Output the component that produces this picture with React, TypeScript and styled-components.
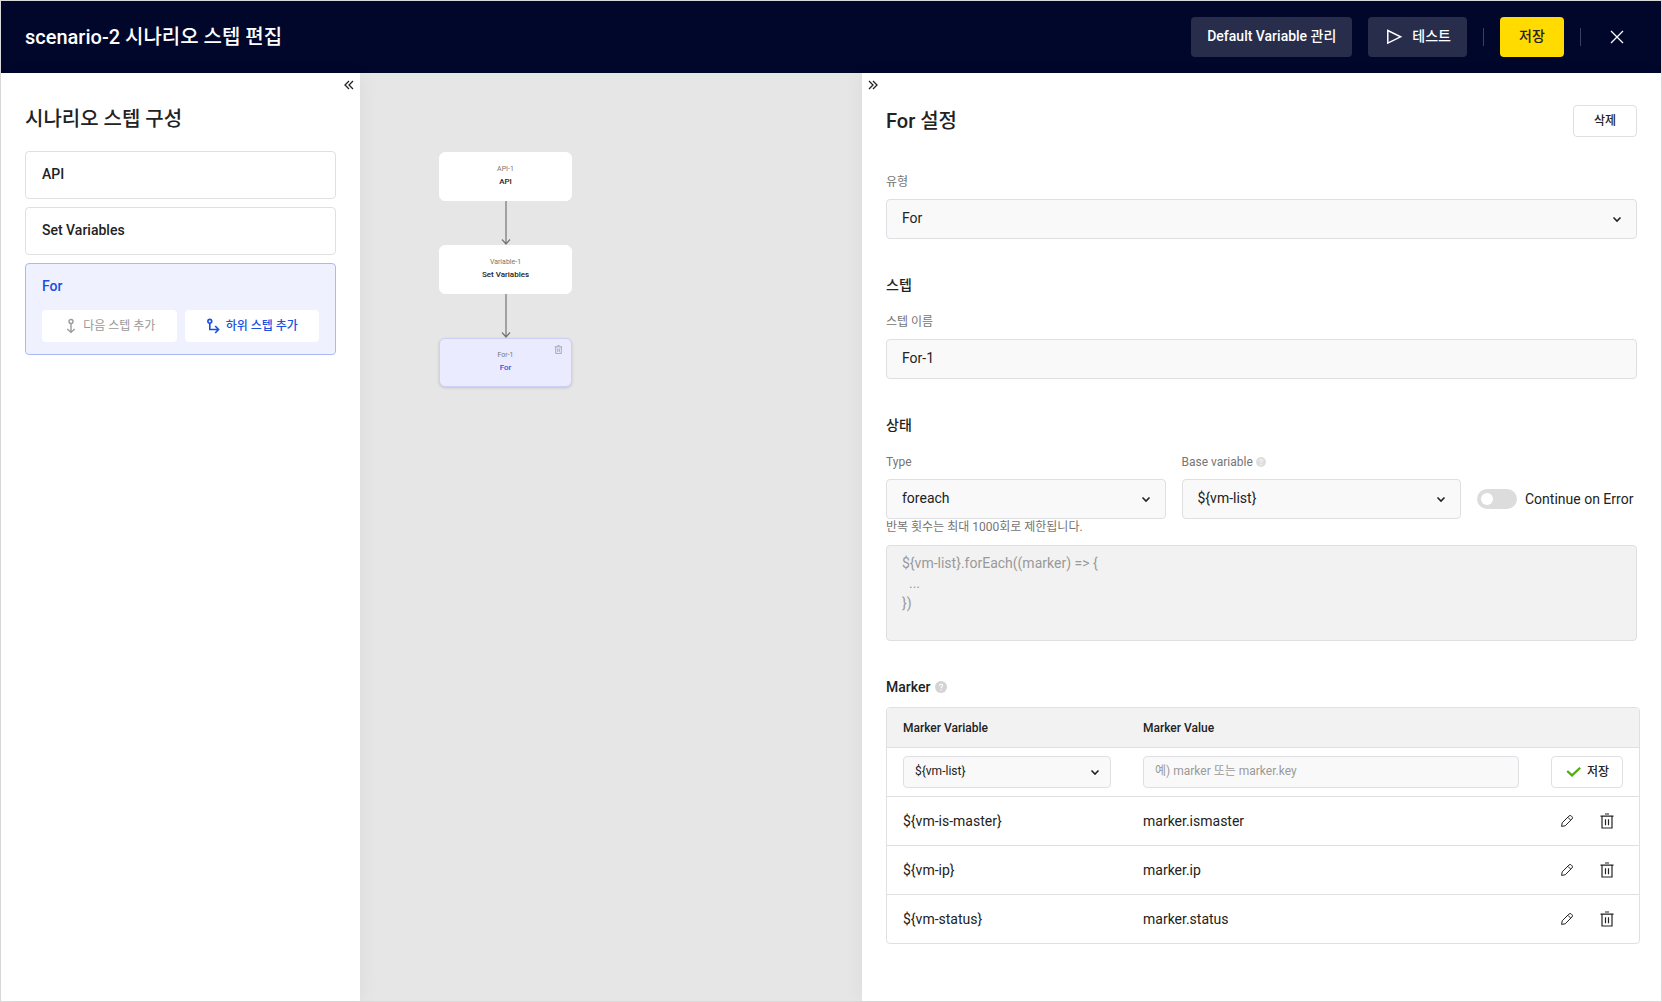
import React, { useState } from "react";
import styled, { createGlobalStyle, css } from "styled-components";

const color = {
  navy: "#00072b",
  navyButton: "#282d4b",
  yellow: "#ffdb00",
  text: "#222222",
  sub: "#757575",
  muted: "#999999",
  line: "#dfdfe3",
  rowLine: "#e0e0e0",
  field: "#f9f9f9",
  disabled: "#f2f2f2",
  canvas: "#e6e6e6",
  blue: "#1a4fe0",
  blueSoft: "#eff2fe",
  blueLine: "#a9b9f8",
};

const GlobalStyle = createGlobalStyle`
  *, *::before, *::after { box-sizing: border-box; }
  body { margin: 0; }
  body, button, input, select, textarea {
    font-family: Roboto, "Noto Sans CJK KR", sans-serif;
    font-size: 14px;
    line-height: 20px;
    color: ${color.text};
  }
  button { cursor: pointer; }
  h1, h2, h3, p { margin: 0; }
`;

const Page = styled.div`
  display: flex;
  flex-direction: column;
  min-height: 100vh;
  border: 1px solid #d9d9d9;
  background: #fff;
`;

const Header = styled.header`
  display: flex;
  align-items: center;
  justify-content: space-between;
  height: 72px;
  padding: 0 24px;
  background: ${color.navy};
`;

const Title = styled.h1`
  font-size: 20px;
  line-height: 28px;
  font-weight: 500;
  color: #fff;
`;

const HeaderActions = styled.div`
  display: flex;
  align-items: center;
  gap: 16px;
`;

const HeaderButton = styled.button<{ $primary?: boolean }>`
  display: flex;
  align-items: center;
  justify-content: center;
  gap: 8px;
  height: 40px;
  min-width: 64px;
  padding: 0 16px 2px;
  border: 0;
  border-radius: 4px;
  font-weight: 500;
  background: ${(p) => (p.$primary ? color.yellow : color.navyButton)};
  color: ${(p) => (p.$primary ? color.text : "#fff")};
`;

const Divider = styled.span`
  width: 1px;
  height: 18px;
  background: #3a4060;
`;

const IconButton = styled.button<{ $size: number }>`
  display: flex;
  align-items: center;
  justify-content: center;
  width: ${(p) => p.$size}px;
  height: ${(p) => p.$size}px;
  padding: 0;
  border: 0;
  background: none;
`;

const Workspace = styled.div`
  flex: 1;
  display: grid;
  grid-template-columns: 359px minmax(240px, 1fr) 799px;
`;

const Panel = styled.section<{ $side: "left" | "right" }>`
  z-index: 1;
  padding: 0 24px 24px;
  background: #fff;
  box-shadow: ${(p) => (p.$side === "left" ? "4px" : "-4px")} 0 16px rgba(0, 0, 0, 0.04);
`;

const PanelToggle = styled.div<{ $side: "left" | "right" }>`
  display: flex;
  justify-content: ${(p) => (p.$side === "left" ? "flex-end" : "flex-start")};
  height: 32px;
  margin: 0 -24px;
  padding-top: 1px;
`;

const PanelTitle = styled.h2`
  font-size: 20px;
  line-height: 28px;
  font-weight: 500;
`;

const StepList = styled.ul`
  display: flex;
  flex-direction: column;
  gap: 8px;
  margin: 18px 0 0;
  padding: 0;
  list-style: none;
`;

const StepCard = styled.li<{ $active?: boolean }>`
  border: 1px solid ${(p) => (p.$active ? color.blueLine : color.rowLine)};
  border-radius: 4px;
  padding: 0 16px;
  background: ${(p) => (p.$active ? color.blueSoft : "#fff")};
`;

const StepName = styled.h3<{ $active?: boolean }>`
  padding-bottom: 2px;
  font-size: 14px;
  line-height: 44px;
  font-weight: 500;
  color: ${(p) => (p.$active ? color.blue : color.text)};
`;

const StepActions = styled.div`
  display: grid;
  grid-template-columns: 1fr 1fr;
  gap: 8px;
  padding-bottom: 12px;
`;

const StepButton = styled.button<{ $enabled?: boolean }>`
  display: flex;
  align-items: center;
  justify-content: center;
  gap: 4px;
  height: 32px;
  padding: 0;
  border: 0;
  border-radius: 4px;
  background: #fff;
  font-size: 12px;
  font-weight: ${(p) => (p.$enabled ? 500 : 400)};
  color: ${(p) => (p.$enabled ? color.blue : color.muted)};
`;

const Canvas = styled.main`
  display: flex;
  flex-direction: column;
  align-items: flex-start;
  padding: 79px;
  background: ${color.canvas};
`;

const Flow = styled.div`
  display: flex;
  flex-direction: column;
  align-items: center;
`;

const Node = styled.div<{ $active?: boolean }>`
  position: relative;
  display: flex;
  flex-direction: column;
  align-items: center;
  justify-content: center;
  gap: 3px;
  width: 133px;
  height: 49px;
  padding-bottom: 2px;
  border: 1px solid ${(p) => (p.$active ? "#cdd0f5" : "#fff")};
  border-radius: 6px;
  background: ${(p) => (p.$active ? "#eaebfe" : "#fff")};
  ${(p) =>
    p.$active &&
    css`
      box-shadow: 0 1px 3px rgba(0, 0, 0, 0.15);
    `}
`;

const NodeId = styled.span`
  font-size: 7px;
  line-height: 10px;
  color: #757575;
`;

const NodeName = styled.strong<{ $active?: boolean }>`
  font-size: 8px;
  line-height: 10px;
  font-weight: 500;
  color: ${(p) => (p.$active ? "#3a4ee0" : color.text)};
`;

const NodeDelete = styled.button`
  position: absolute;
  top: 6px;
  right: 8px;
  display: flex;
  padding: 0;
  border: 0;
  background: none;
`;

const PanelHeader = styled.div`
  display: flex;
  align-items: center;
  justify-content: space-between;
  height: 32px;
  margin-bottom: 35px;
`;

const SmallButton = styled.button<{ $width: number }>`
  display: flex;
  align-items: center;
  justify-content: center;
  gap: 6px;
  width: ${(p) => p.$width}px;
  height: 32px;
  padding: 0;
  border: 1px solid ${color.rowLine};
  border-radius: 4px;
  background: #fff;
  font-size: 12px;
  font-weight: 500;
`;

const Group = styled.section`
  margin-bottom: 36px;
  &:last-child {
    margin-bottom: 0;
  }
`;

const GroupTitle = styled.h3<{ $gap: number }>`
  display: flex;
  align-items: center;
  gap: 5px;
  margin-bottom: ${(p) => p.$gap}px;
  font-size: 14px;
  line-height: 20px;
  font-weight: 500;
`;

const Field = styled.div`
  display: flex;
  flex-direction: column;
  gap: 7px;
`;

const Label = styled.label`
  display: flex;
  align-items: center;
  gap: 3px;
  font-size: 12px;
  line-height: 20px;
  color: ${color.sub};
`;

const box = css<{ $small?: boolean }>`
  display: block;
  width: 100%;
  height: ${(p) => (p.$small ? 32 : 40)}px;
  padding: 0 ${(p) => (p.$small ? 11 : 15)}px 2px;
  border: 1px solid ${color.line};
  border-radius: 4px;
  background: ${color.field};
  font-size: ${(p) => (p.$small ? 12 : 14)}px;
  outline: none;
`;

const Input = styled.input<{ $small?: boolean }>`
  ${box}
  &::placeholder {
    color: ${color.muted};
    opacity: 1;
  }
`;

const SelectWrap = styled.div<{ $small?: boolean }>`
  display: grid;
  align-items: center;
  > * {
    grid-area: 1 / 1;
  }
  > svg {
    justify-self: end;
    margin-right: ${(p) => (p.$small ? 8 : 12)}px;
    pointer-events: none;
  }
`;

const NativeSelect = styled.select<{ $small?: boolean }>`
  ${box}
  appearance: none;
`;

const StateRow = styled.div`
  display: grid;
  grid-template-columns: 1fr 1fr 160px;
  gap: 16px;
  align-items: end;
`;

const SwitchLabel = styled.label`
  display: flex;
  align-items: center;
  gap: 8px;
  height: 40px;
  white-space: nowrap;
`;

const Switch = styled.input`
  appearance: none;
  display: flex;
  align-items: center;
  width: 40px;
  height: 20px;
  margin: 0;
  padding: 0 4px;
  border-radius: 10px;
  background: #dcdcdc;
  &::before {
    content: "";
    width: 12px;
    height: 12px;
    border-radius: 50%;
    background: #fff;
  }
  &:checked {
    justify-content: flex-end;
    background: ${color.blue};
  }
`;

const Hint = styled.p`
  margin-bottom: 10px;
  font-size: 12px;
  line-height: 16px;
  color: ${color.sub};
`;

const Code = styled.textarea`
  display: block;
  width: 100%;
  height: 96px;
  padding: 7px 15px;
  border: 1px solid ${color.line};
  border-radius: 4px;
  background: ${color.disabled};
  color: ${color.muted};
  resize: none;
`;

const TableFrame = styled.div`
  margin-right: -3px;
  border: 1px solid ${color.rowLine};
  border-radius: 4px;
  overflow: hidden;
`;

const Table = styled.table`
  width: 100%;
  table-layout: fixed;
  border-collapse: separate;
  border-spacing: 0;
`;

const Th = styled.th<{ $width?: number }>`
  width: ${(p) => (p.$width ? `${p.$width}px` : "auto")};
  height: 39px;
  padding: 0 16px;
  background: ${color.disabled};
  text-align: left;
  font-size: 12px;
  font-weight: 500;
`;

const Td = styled.td`
  height: 49px;
  padding: 0 16px;
  border-top: 1px solid ${color.rowLine};
`;

const RowActions = styled.div`
  display: flex;
  justify-content: flex-end;
  gap: 8px;
`;

const CloseIcon = () => (
  <svg width="14" height="14" viewBox="0 0 14 14" fill="none" stroke="#fff" strokeWidth="1.3">
    <path d="M1 1l12 12M13 1L1 13" />
  </svg>
);

const PlayIcon = () => (
  <svg width="20" height="20" viewBox="0 0 20 20" fill="none" stroke="#fff" strokeWidth="1.5">
    <path d="M3.8 4.5v12.6L16.6 10.8z" />
  </svg>
);

const ChevronsIcon = ({ flip }: { flip?: boolean }) => (
  <svg width="10" height="10" viewBox="0 0 10 10" fill="none" stroke={color.text} strokeWidth="1.3">
    <path d={flip ? "M1 1l4 4-4 4M5 1l4 4-4 4" : "M5 1L1 5l4 4M9 1L5 5l4 4"} />
  </svg>
);

const ChevronDown = () => (
  <svg width="16" height="16" viewBox="0 0 16 16" fill="none" stroke={color.text} strokeWidth="1.6">
    <path d="M4.5 6.5L8 10l3.5-3.5" />
  </svg>
);

const NextStepIcon = () => (
  <svg width="16" height="16" viewBox="0 0 16 16" fill="none" stroke="currentColor" strokeWidth="1.4">
    <circle cx="8" cy="3.5" r="2" />
    <path d="M8 5.5v9M4.3 11L8 14.4 11.7 11" />
  </svg>
);

const ChildStepIcon = () => (
  <svg width="16" height="16" viewBox="0 0 16 16" fill="none" stroke="currentColor" strokeWidth="1.6">
    <circle cx="3.8" cy="3.3" r="1.9" />
    <path d="M3.8 5.3v6.2h8.5M9.2 8l3.4 3.5L9.2 15" />
  </svg>
);

const ArrowIcon = () => (
  <svg width="12" height="44" viewBox="0 0 12 44" fill="none" stroke="#757575" strokeWidth="1.2">
    <path d="M6 0v43M2 38.5L6 43l4-4.5" />
  </svg>
);

const HelpIcon = ({ size, fill }: { size: number; fill: string }) => (
  <svg width={size} height={size} viewBox="0 0 12 12" fill="none">
    <circle cx="6" cy="6" r="6" fill={fill} />
    <path d="M4.4 4.7c0-2 3.2-2 3.2-.1C7.6 5.8 6 5.7 6 7.2" stroke="#fff" strokeWidth="1.1" />
    <circle cx="6" cy="8.9" r=".7" fill="#fff" />
  </svg>
);

const CheckIcon = () => (
  <svg width="16" height="12" viewBox="0 0 16 12" fill="none" stroke="#4caf0c" strokeWidth="2.2">
    <path d="M2.2 5l4.8 4.4L15.2 1.8" />
  </svg>
);

const PencilIcon = () => (
  <svg width="12" height="12" viewBox="0 0 12 12" fill="none" stroke={color.text} strokeWidth="1" strokeLinejoin="round">
    <path d="M.6 11.4l.6-3.6L7.9 1.1a1.7 1.7 0 0 1 2.5 0l.5.5a1.7 1.7 0 0 1 0 2.5l-6.7 6.7zM7 2.4l2.6 2.6" />
  </svg>
);

const TrashIcon = ({ size, stroke }: { size: number; stroke: string }) => (
  <svg width={size} height={size} viewBox="0 0 16 16" fill="none" stroke={stroke} strokeWidth="1.2">
    <path d="M6 1h4M1.5 3.2h13M3 3.2V15h10V3.2M6.5 6.2v6M9.5 6.2v6" />
  </svg>
);

type SelectProps = { id?: string; label?: string; options: string[]; small?: boolean };

const Select = ({ id, label, options, small }: SelectProps) => (
  <SelectWrap $small={small}>
    <NativeSelect id={id} aria-label={label} $small={small}>
      {options.map((o) => (
        <option key={o}>{o}</option>
      ))}
    </NativeSelect>
    <ChevronDown />
  </SelectWrap>
);

const nodes = [
  { id: "API-1", name: "API" },
  { id: "Variable-1", name: "Set Variables" },
  { id: "For-1", name: "For", active: true },
];

const markers = [
  { variable: "${vm-is-master}", value: "marker.ismaster" },
  { variable: "${vm-ip}", value: "marker.ip" },
  { variable: "${vm-status}", value: "marker.status" },
];

const code = "${vm-list}.forEach((marker) => {\n  ...\n})";

export default function App() {
  const [name, setName] = useState("For-1");
  const [value, setValue] = useState("");

  return (
    <>
      <GlobalStyle />
      <Page>
        <Header>
          <Title>scenario-2 시나리오 스텝 편집</Title>
          <HeaderActions>
            <HeaderButton type="button">Default Variable 관리</HeaderButton>
            <HeaderButton type="button">
              <PlayIcon />
              테스트
            </HeaderButton>
            <Divider />
            <HeaderButton type="button" $primary>
              저장
            </HeaderButton>
            <Divider />
            <IconButton type="button" $size={40} aria-label="닫기">
              <CloseIcon />
            </IconButton>
          </HeaderActions>
        </Header>

        <Workspace>
          <Panel $side="left">
            <PanelToggle $side="left">
              <IconButton type="button" $size={22} aria-label="접기">
                <ChevronsIcon />
              </IconButton>
            </PanelToggle>
            <PanelTitle>시나리오 스텝 구성</PanelTitle>
            <StepList>
              {nodes.map((n) => (
                <StepCard key={n.id} $active={n.active}>
                  <StepName $active={n.active}>{n.name}</StepName>
                  {n.active && (
                    <StepActions>
                      <StepButton type="button" disabled>
                        <NextStepIcon />
                        다음 스텝 추가
                      </StepButton>
                      <StepButton type="button" $enabled>
                        <ChildStepIcon />
                        하위 스텝 추가
                      </StepButton>
                    </StepActions>
                  )}
                </StepCard>
              ))}
            </StepList>
          </Panel>

          <Canvas>
            <Flow>
              {nodes.map((n, i) => (
                <React.Fragment key={n.id}>
                  {i > 0 && <ArrowIcon />}
                  <Node $active={n.active}>
                    <NodeId>{n.id}</NodeId>
                    <NodeName $active={n.active}>{n.name}</NodeName>
                    {n.active && (
                      <NodeDelete type="button" aria-label="삭제">
                        <TrashIcon size={9} stroke="#8a8a94" />
                      </NodeDelete>
                    )}
                  </Node>
                </React.Fragment>
              ))}
            </Flow>
          </Canvas>

          <Panel $side="right">
            <PanelToggle $side="right">
              <IconButton type="button" $size={22} aria-label="접기">
                <ChevronsIcon flip />
              </IconButton>
            </PanelToggle>
            <PanelHeader>
              <PanelTitle>For 설정</PanelTitle>
              <SmallButton type="button" $width={64}>
                삭제
              </SmallButton>
            </PanelHeader>

            <Group>
              <Field>
                <Label htmlFor="kind">유형</Label>
                <Select id="kind" options={["For", "API", "Set Variables"]} />
              </Field>
            </Group>

            <Group>
              <GroupTitle $gap={17}>스텝</GroupTitle>
              <Field>
                <Label htmlFor="step-name">스텝 이름</Label>
                <Input id="step-name" value={name} onChange={(e) => setName(e.target.value)} />
              </Field>
            </Group>

            <Group>
              <GroupTitle $gap={17}>상태</GroupTitle>
              <StateRow>
                <Field>
                  <Label htmlFor="loop-type">Type</Label>
                  <Select id="loop-type" options={["foreach"]} />
                </Field>
                <Field>
                  <Label htmlFor="base-variable">
                    Base variable
                    <HelpIcon size={10} fill="#dedede" />
                  </Label>
                  <Select id="base-variable" options={["${vm-list}"]} />
                </Field>
                <SwitchLabel>
                  <Switch type="checkbox" role="switch" />
                  Continue on Error
                </SwitchLabel>
              </StateRow>
              <Hint>반복 횟수는 최대 1000회로 제한됩니다.</Hint>
              <Code aria-label="반복 코드" disabled value={code} />
            </Group>

            <Group>
              <GroupTitle $gap={10}>
                Marker
                <HelpIcon size={12} fill="#d3d3d3" />
              </GroupTitle>
              <TableFrame>
                <Table>
                  <thead>
                    <tr>
                      <Th $width={240}>Marker Variable</Th>
                      <Th>Marker Value</Th>
                      <Th $width={104} aria-label="작업" />
                    </tr>
                  </thead>
                  <tbody>
                    <tr>
                      <Td>
                        <Select small label="Marker Variable" options={["${vm-list}"]} />
                      </Td>
                      <Td>
                        <Input
                          $small
                          aria-label="Marker Value"
                          placeholder="예) marker 또는 marker.key"
                          value={value}
                          onChange={(e) => setValue(e.target.value)}
                        />
                      </Td>
                      <Td>
                        <SmallButton type="button" $width={72}>
                          <CheckIcon />
                          저장
                        </SmallButton>
                      </Td>
                    </tr>
                    {markers.map((m) => (
                      <tr key={m.variable}>
                        <Td>{m.variable}</Td>
                        <Td>{m.value}</Td>
                        <Td>
                          <RowActions>
                            <IconButton type="button" $size={32} aria-label="수정">
                              <PencilIcon />
                            </IconButton>
                            <IconButton type="button" $size={32} aria-label="삭제">
                              <TrashIcon size={16} stroke={color.text} />
                            </IconButton>
                          </RowActions>
                        </Td>
                      </tr>
                    ))}
                  </tbody>
                </Table>
              </TableFrame>
            </Group>
          </Panel>
        </Workspace>
      </Page>
    </>
  );
}
